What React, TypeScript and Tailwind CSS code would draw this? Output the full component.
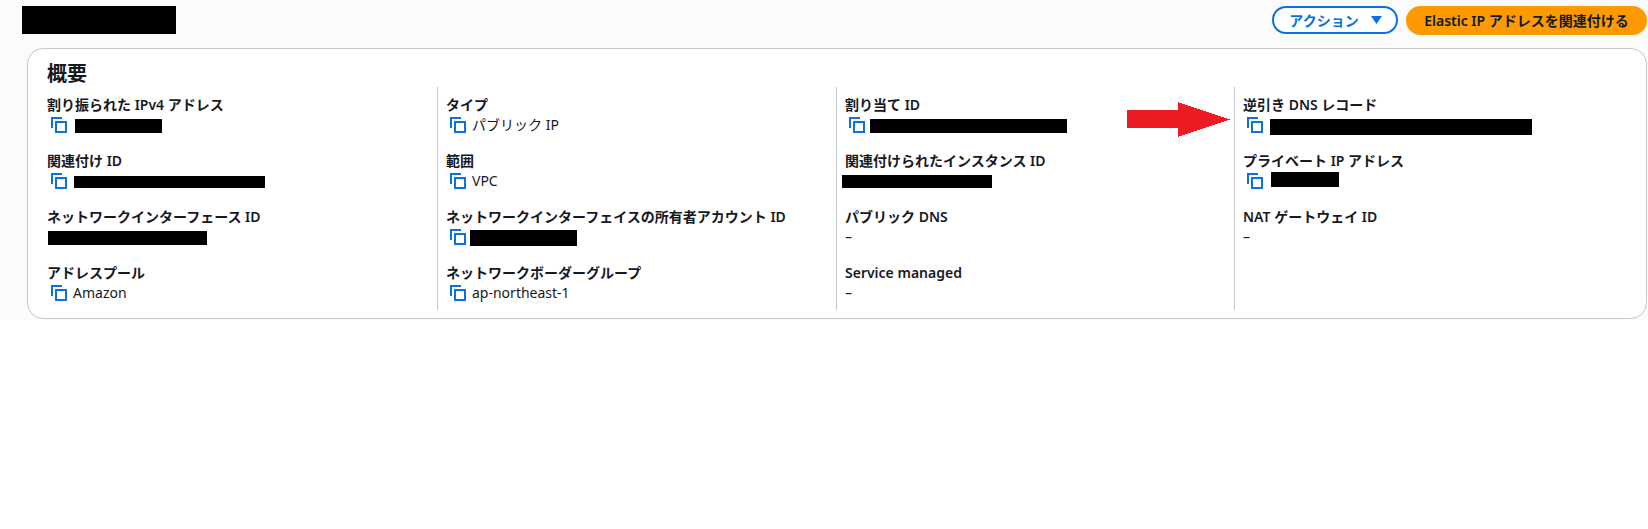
const CopyIcon = () => (
  <svg viewBox="0 0 16 16" className="w-4 h-4 shrink-0" fill="none" stroke="#0972e0" strokeWidth="2">
    <path d="M1 11V1H11" strokeLinecap="butt" />
    <rect x="5" y="5" width="10" height="10" />
  </svg>
);

const Field = ({ label, value, copy, bar }: { label: string; value?: string; copy?: boolean; bar?: string }) => (
  <div className="h-[56px]">
    <div className="h-[21px] leading-[21px] font-semibold text-[14px] text-[#16191f] whitespace-nowrap">{label}</div>
    <div className="h-[19px] flex items-center leading-[19px] text-[14px] text-[#16191f] whitespace-nowrap">
      {copy && <span className="ml-[4px] mr-[6px]"><CopyIcon /></span>}
      {value}
      {bar && <span className={`bg-black block ${bar}`} />}
    </div>
  </div>
);

export default function App() {
  return (
    <div className="w-[1648px] h-[529px] bg-white overflow-hidden font-['Noto_Sans','Noto_Sans_CJK_JP',sans-serif]">
      <div className="h-[320px] bg-[#fbfbfb]">
        <div className="flex items-center justify-between h-[48px] pl-[22px] pr-[1px]">
          <div className="w-[154px] h-[28px] bg-black -mt-[9px]" />
          <div className="flex gap-[8px] -mt-[7px]">
            <button className="w-[126px] h-[28px] pl-[2px] rounded-full border-2 border-[#0972e0] bg-white text-[#0972e0] font-semibold text-[14px] flex items-center justify-center gap-[11px]">
              アクション
              <svg viewBox="0 0 13 10" className="w-[13px] h-[10px]"><path d="M1 1h11L6.5 9z" fill="#0972e0" /></svg>
            </button>
            <button className="w-[241px] h-[29px] rounded-full bg-[#ff9900] text-[#0f1b2a] font-semibold text-[14px]">Elastic IP アドレスを関連付ける</button>
          </div>
        </div>
        <section className="relative ml-[27px] mr-[1px] h-[271px] bg-white border border-[#c6c6cd] rounded-[16px] pl-[19px] pt-[11px]">
          <h2 className="h-[27px] leading-[27px] text-[20px] font-bold text-[#16191f]">概要</h2>
          <div className="grid grid-cols-[390px_399px_398px_1fr]">
            <div className="h-[223px] pt-[7px]">
              <Field label="割り振られた IPv4 アドレス" copy bar="w-[87px] h-[14px] mt-[3px] ml-[2px]" />
              <Field label="関連付け ID" copy bar="w-[191px] h-[12px] mt-[3px] ml-[1px]" />
              <Field label="ネットワークインターフェース ID" bar="w-[159px] h-[14px] mt-[3px] ml-[1px]" />
              <Field label="アドレスプール" copy value="Amazon" />
            </div>
            <div className="h-[223px] pt-[7px] pl-[8px] border-l border-[#c6c6cd]">
              <Field label="タイプ" copy value="パブリック IP" />
              <Field label="範囲" copy value="VPC" />
              <Field label="ネットワークインターフェイスの所有者アカウント ID" copy bar="w-[107px] h-[16px] mt-[3px] -ml-[2px]" />
              <Field label="ネットワークボーダーグループ" copy value="ap-northeast-1" />
            </div>
            <div className="h-[223px] pt-[7px] pl-[8px] border-l border-[#c6c6cd]">
              <Field label="割り当て ID" copy bar="w-[197px] h-[14px] mt-[3px] -ml-[1px]" />
              <Field label="関連付けられたインスタンス ID" bar="w-[150px] h-[13px] mt-[2px] -ml-[3px]" />
              <Field label="パブリック DNS" value="–" />
              <Field label="Service managed" value="–" />
            </div>
            <div className="h-[223px] pt-[7px] pl-[8px] border-l border-[#c6c6cd]">
              <Field label="逆引き DNS レコード" copy bar="w-[262px] h-[16px] mt-[5px] ml-[1px]" />
              <Field label="プライベート IP アドレス" copy bar="w-[68px] h-[15px] -mt-[2px] ml-[2px]" />
              <Field label="NAT ゲートウェイ ID" value="–" />
            </div>
          </div>
          <svg viewBox="0 0 103 35" shapeRendering="crispEdges" className="absolute left-[1099px] top-[53px] w-[103px] h-[35px]">
            <path d="M0 8H51V0L103 17.5L51 35V26H0z" fill="#ed1c24" />
          </svg>
        </section>
      </div>
    </div>
  );
}
